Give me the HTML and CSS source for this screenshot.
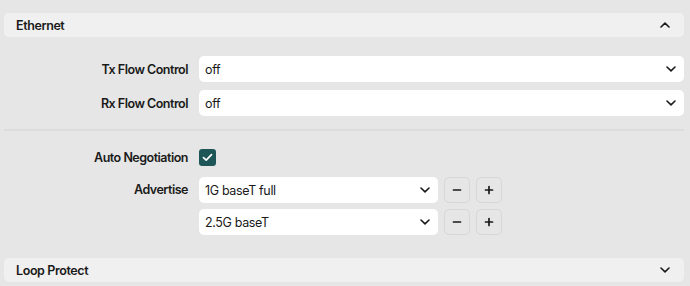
FILE: index.html
```html
<!DOCTYPE html>
<html>
<head>
<meta charset="utf-8">
<link rel="stylesheet" href="styles.css">
</head>
<body>
<div class="page">
  <div class="section-head">
    <span class="section-title">Ethernet</span>
    <svg class="chev" width="10" height="6" viewBox="0 0 10 6"><path d="M1 5 L5 1.2 L9 5" fill="none" stroke="#1a1a1a" stroke-width="1.6" stroke-linecap="round" stroke-linejoin="round"/></svg>
  </div>

  <div class="form form-top">
    <label class="lbl">Tx Flow Control</label>
    <div class="select wide"><span>off</span><svg class="chev" width="10" height="6" viewBox="0 0 10 6"><path d="M1 1 L5 4.8 L9 1" fill="none" stroke="#1a1a1a" stroke-width="1.6" stroke-linecap="round" stroke-linejoin="round"/></svg></div>
    <label class="lbl">Rx Flow Control</label>
    <div class="select wide"><span>off</span><svg class="chev" width="10" height="6" viewBox="0 0 10 6"><path d="M1 1 L5 4.8 L9 1" fill="none" stroke="#1a1a1a" stroke-width="1.6" stroke-linecap="round" stroke-linejoin="round"/></svg></div>
  </div>

  <div class="divider"></div>

  <div class="form form-bottom">
    <label class="lbl">Auto Negotiation</label>
    <div class="check-wrap"><span class="checkbox"><svg width="11" height="9" viewBox="0 0 11 9"><path d="M1.5 4.6 L4.2 7.2 L9.5 1.6" fill="none" stroke="#ffffff" stroke-width="1.7" stroke-linecap="round" stroke-linejoin="round"/></svg></span></div>
    <label class="lbl adv">Advertise</label>
    <div class="adv-list">
      <div class="adv-row">
        <div class="select narrow"><span>1G baseT full</span><svg class="chev" width="10" height="6" viewBox="0 0 10 6"><path d="M1 1 L5 4.8 L9 1" fill="none" stroke="#1a1a1a" stroke-width="1.6" stroke-linecap="round" stroke-linejoin="round"/></svg></div>
        <button class="btn"><svg width="10" height="10" viewBox="0 0 10 10"><path d="M1.5 5 H8.5" stroke="#1a1a1a" stroke-width="1.7" stroke-linecap="round"/></svg></button>
        <button class="btn"><svg width="10" height="10" viewBox="0 0 10 10"><path d="M1.5 5 H8.5 M5 1.5 V8.5" stroke="#1a1a1a" stroke-width="1.7" stroke-linecap="round"/></svg></button>
      </div>
      <div class="adv-row">
        <div class="select narrow"><span>2.5G baseT</span><svg class="chev" width="10" height="6" viewBox="0 0 10 6"><path d="M1 1 L5 4.8 L9 1" fill="none" stroke="#1a1a1a" stroke-width="1.6" stroke-linecap="round" stroke-linejoin="round"/></svg></div>
        <button class="btn"><svg width="10" height="10" viewBox="0 0 10 10"><path d="M1.5 5 H8.5" stroke="#1a1a1a" stroke-width="1.7" stroke-linecap="round"/></svg></button>
        <button class="btn"><svg width="10" height="10" viewBox="0 0 10 10"><path d="M1.5 5 H8.5 M5 1.5 V8.5" stroke="#1a1a1a" stroke-width="1.7" stroke-linecap="round"/></svg></button>
      </div>
    </div>
  </div>

  <div class="section-head loop">
    <span class="section-title">Loop Protect</span>
    <svg class="chev" width="10" height="6" viewBox="0 0 10 6"><path d="M1 1 L5 4.8 L9 1" fill="none" stroke="#1a1a1a" stroke-width="1.6" stroke-linecap="round" stroke-linejoin="round"/></svg>
  </div>
</div>
</body>
</html>
```

FILE: styles.css
```css
* { box-sizing: border-box; }
html, body {
  margin: 0;
  padding: 0;
  background: #e5e6e5;
  font-family: Inter, "Noto Sans", sans-serif;
  color: #1a1a1a;
}
.page {
  width: 690px;
  height: 286px;
  padding: 13px 6px 0 4px;
  display: flex;
  flex-direction: column;
}
.section-head {
  height: 24px;
  background: #f0f0f0;
  border-radius: 5px;
  display: flex;
  align-items: center;
  justify-content: space-between;
  padding: 0 14px 0 12px;
}
.section-title {
  font-size: 12.5px;
  font-weight: 600;
  letter-spacing: -0.4px;
}
.form {
  display: grid;
  grid-template-columns: 184px 1fr;
  column-gap: 11px;
  align-items: center;
}
.form-top {
  margin-top: 19px;
  row-gap: 8px;
}
.form-bottom {
  margin-top: 18px;
  row-gap: 11px;
  align-items: start;
}
.lbl {
  text-align: right;
  font-size: 12.5px;
  font-weight: 600;
  letter-spacing: -0.5px;
  line-height: 17px;
}
.lbl.adv { line-height: 26px; }
.select {
  height: 26px;
  background: #ffffff;
  border-radius: 5px;
  display: flex;
  align-items: center;
  justify-content: space-between;
  padding: 0 8px 0 6px;
  font-size: 12.5px;
  letter-spacing: -0.35px;
}
.select.narrow { width: 239px; }
.check-wrap { height: 17px; display: flex; align-items: center; }
.checkbox {
  width: 17px;
  height: 17px;
  border-radius: 3px;
  background: #1e5658;
  display: flex;
  align-items: center;
  justify-content: center;
}
.adv-list {
  display: flex;
  flex-direction: column;
  gap: 6px;
}
.adv-row {
  display: flex;
  gap: 6px;
  align-items: center;
}
.btn {
  width: 26px;
  height: 26px;
  padding: 0;
  margin: 0;
  border: 1px solid #d6d7d6;
  border-radius: 5px;
  background: #e5e6e5;
  display: flex;
  align-items: center;
  justify-content: center;
}
.divider {
  height: 2px;
  background: #dbdcdb;
  margin-top: 13px;
}
.loop { margin-top: 23px; }
```
